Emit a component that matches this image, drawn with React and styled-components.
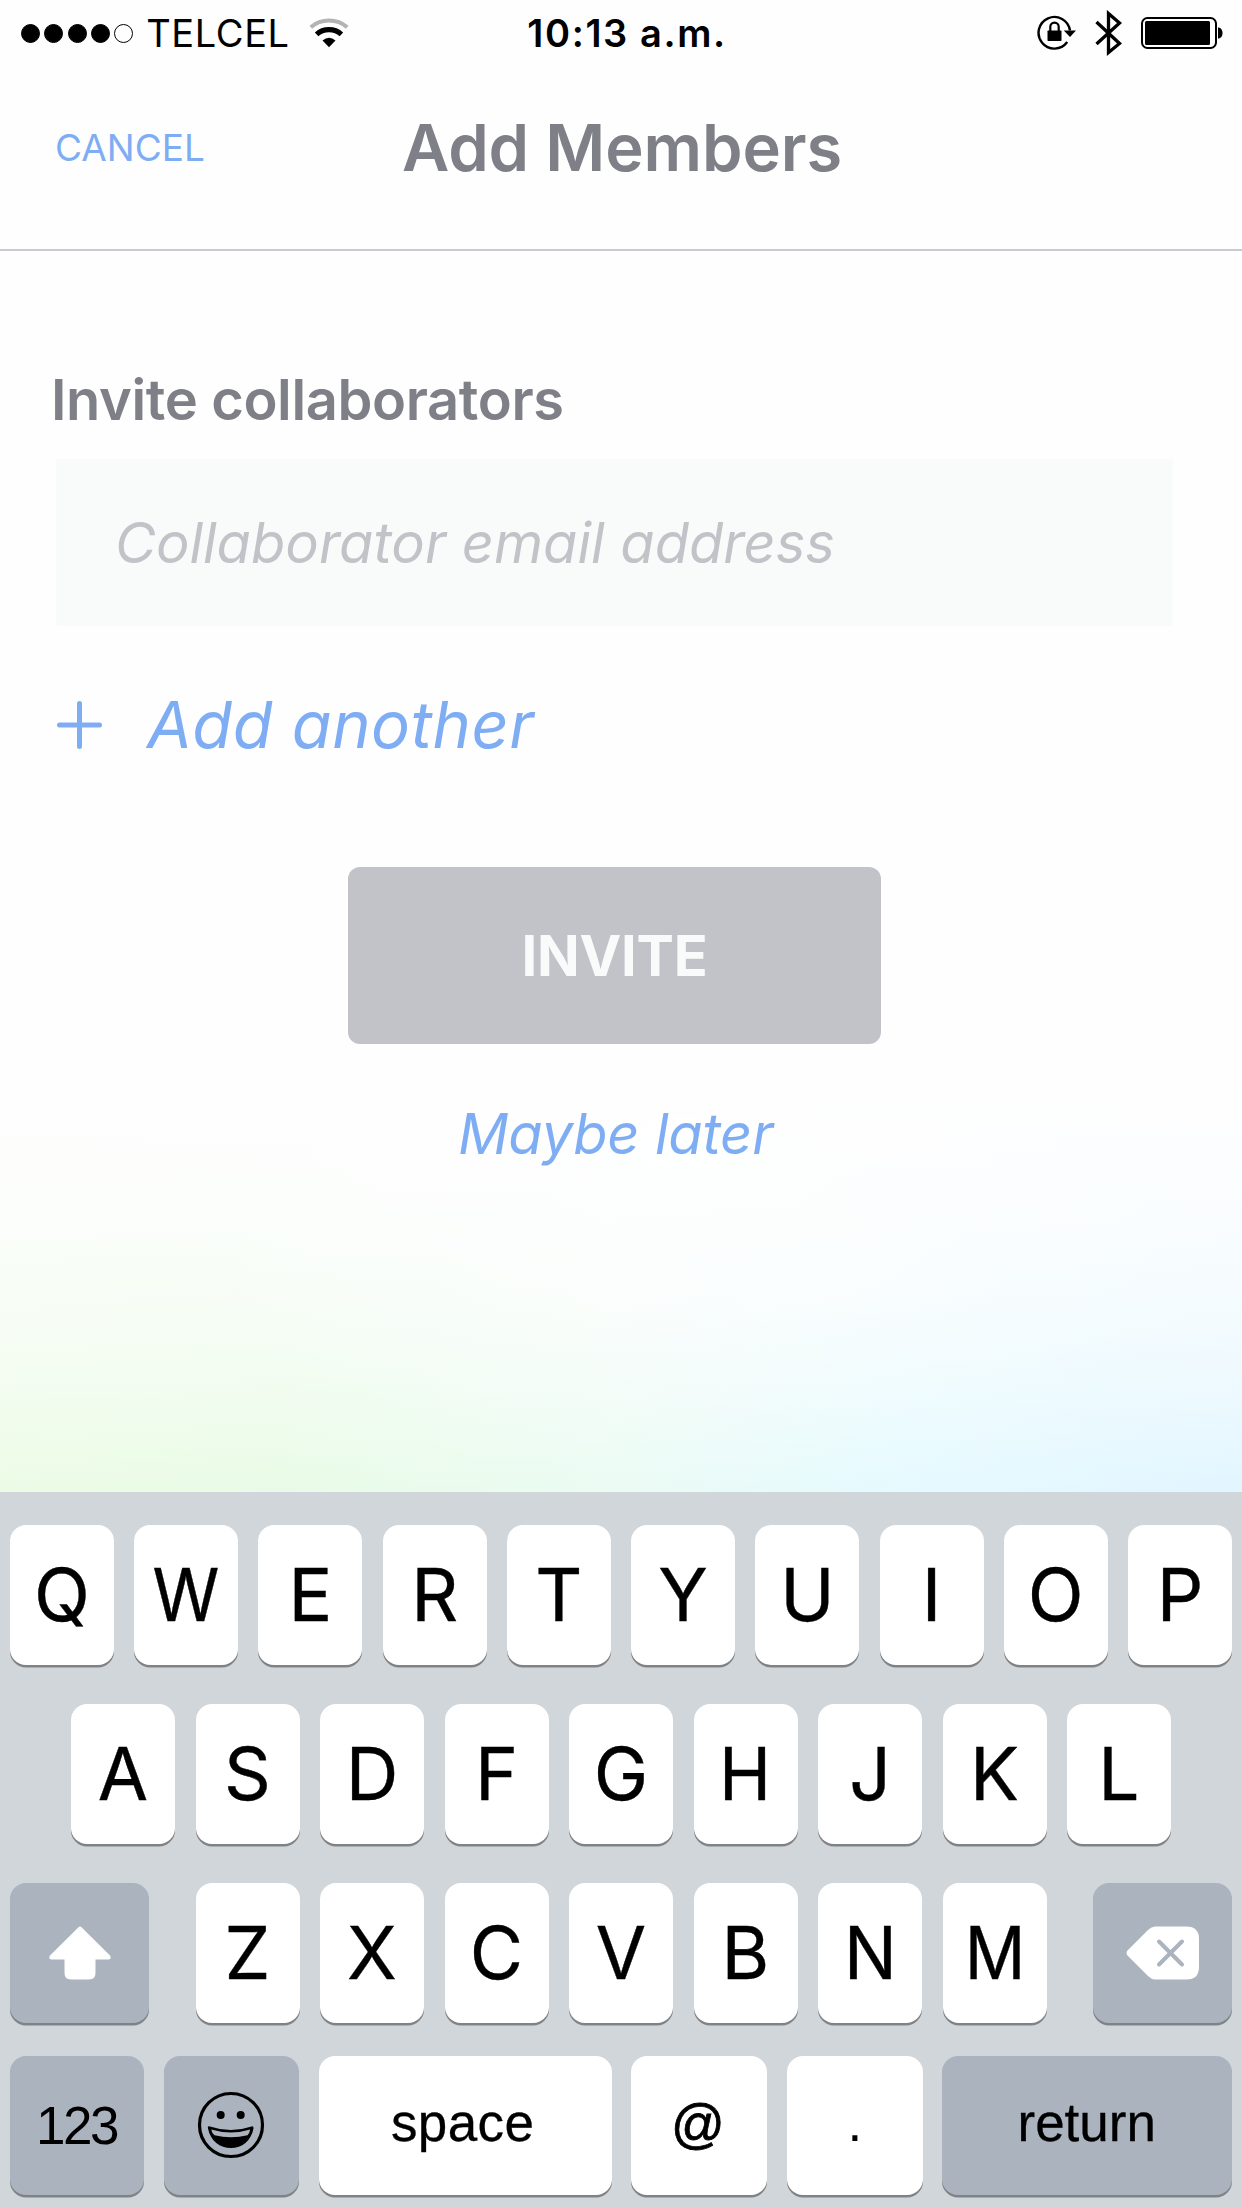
import React from "react";
import styled, { createGlobalStyle } from "styled-components";

const GlobalStyle = createGlobalStyle`
  * { box-sizing: border-box; }
  body { margin: 0; background: #fff; }
  button { border: 0; padding: 0; background: none; font: inherit; color: inherit; }
`;

const Screen = styled.div`
  display: flex;
  flex-direction: column;
  width: 1242px;
  height: 2208px;
  overflow: hidden;
  background: #fefefe;
  font-family: Inter, "Liberation Sans", sans-serif;
`;

/* ---------- status bar ---------- */

const StatusBar = styled.div`
  display: grid;
  grid-template-columns: 1fr auto 1fr;
  align-items: center;
  flex: none;
  height: 66px;
  padding: 0 19px 0 21px;
  color: #000;
  font-size: 38px;
  line-height: 66px;
`;

const StatusGroup = styled.div`
  display: flex;
  align-items: center;
`;

const StatusIcons = styled(StatusGroup)`
  justify-content: flex-end;
  gap: 19px;
`;

const SignalDots = styled.div`
  display: flex;
  gap: 4.3px;
`;

const Dot = styled.span`
  width: 19px;
  height: 19px;
  border-radius: 50%;
  border: 1.6px solid #000;
  background: ${(p) => (p.$on ? "#000" : "transparent")};
`;

const Carrier = styled.span`
  margin: 0 19px 0 13px;
  letter-spacing: 0.6px;
`;

const Clock = styled.span`
  font-weight: 600;
  letter-spacing: 1.6px;
  padding-left: 10px;
`;

/* ---------- header ---------- */

const Header = styled.header`
  display: grid;
  grid-template-columns: 1fr auto 1fr;
  align-items: center;
  flex: none;
  height: 185px;
  padding: 1px 55px 20px 55px;
  border-bottom: 2px solid #c8cad2;
`;

const CancelButton = styled.button`
  justify-self: start;
  color: #7fadf3;
  font-size: 37px;
  line-height: 50px;
`;

const Title = styled.h1`
  margin: 0;
  padding-left: 2px;
  color: #7f7f88;
  font-size: 65px;
  font-weight: 600;
  line-height: 80px;
  letter-spacing: -0.1px;
`;

/* ---------- form ---------- */

const Content = styled.main`
  display: flex;
  flex-direction: column;
  align-items: center;
  flex: none;
  height: 1241px;
  padding: 119px 69px 0 56px;
  background:
    radial-gradient(ellipse 46% 26% at 55% 72%, rgba(255, 255, 255, 0.55), rgba(255, 255, 255, 0) 100%),
    linear-gradient(
      to bottom,
      #fefefe 68%,
      rgba(254, 254, 254, 0.88) 76%,
      rgba(254, 254, 254, 0.68) 85%,
      rgba(254, 254, 254, 0.38) 93%,
      rgba(254, 254, 254, 0.05) 100%
    ),
    linear-gradient(to right, #ebfbe4 0%, #e8fbe5 22%, #eafbf2 48%, #e4faff 72%, #e0f5ff 100%);
`;

const Label = styled.label`
  align-self: flex-start;
  margin-left: -5px;
  color: #7f7f88;
  font-size: 56px;
  font-weight: 600;
  line-height: 60px;
  letter-spacing: -0.38px;
`;

const EmailInput = styled.input`
  display: block;
  width: 1117px;
  height: 167px;
  margin-top: 29px;
  padding: 1px 59px 0;
  border: 0;
  border-radius: 3px;
  background: #f9fbfa;
  font: italic 400 56px/60px Inter, "Liberation Sans", sans-serif;
  color: #7f7f88;

  &::placeholder {
    color: #c2c3c8;
    opacity: 1;
  }
`;

const AddAnother = styled.button`
  display: flex;
  align-items: center;
  align-self: flex-start;
  gap: 45px;
  margin-top: 69px;
  padding-left: 1px;
  color: #7fadf3;
  font-size: 65px;
  font-style: italic;
  line-height: 60px;
  letter-spacing: 0.5px;
`;

const InviteButton = styled.button`
  width: 533px;
  height: 177px;
  margin-top: 112px;
  border-radius: 12px;
  background: #c2c3c8;
  color: #f9fbfa;
  font-size: 56px;
  font-weight: 750;
  line-height: 60px;
  letter-spacing: -0.2px;
`;

const LaterLink = styled.button`
  margin-top: 60px;
  padding-left: 2px;
  color: #7fadf3;
  font-size: 56px;
  font-style: italic;
  line-height: 60px;
  letter-spacing: -0.2px;
`;

/* ---------- keyboard ---------- */

const Keyboard = styled.div`
  display: flex;
  flex-direction: column;
  flex: none;
  height: 716px;
  padding: 33px 10px 0;
  background: #d1d6da;
`;

const KeyRow = styled.div`
  display: flex;
  justify-content: space-between;
  padding: 0 ${(p) => p.$inset || 0}px;
  margin-bottom: ${(p) => p.$gap || 0}px;
`;

const LetterGroup = styled.div`
  display: flex;
  justify-content: space-between;
  width: 851px;
`;

const Key = styled.button`
  display: flex;
  align-items: center;
  justify-content: center;
  flex: none;
  width: ${(p) => p.$width || 104}px;
  height: 139.5px;
  border-radius: 16px;
  background: ${(p) => (p.$dark ? "#abb3bf" : "#fff")};
  box-shadow: 0 2.5px 0 #808386;
  color: #000;
  font-size: 73px;
  line-height: 139px;
`;

const Glyph = styled.span`
  -webkit-text-stroke: 0.4px #000;
  transform: scaleX(${(p) => p.$stretch});
`;

const WordKey = styled(Key)`
  font-family: "Liberation Sans", Arial, sans-serif;
  font-size: 53px;
  letter-spacing: ${(p) => p.$tracking || 0}px;
  padding: 0 ${(p) => p.$shift || 0}px ${(p) => p.$lift || 0}px 0;
  -webkit-text-stroke: ${(p) => p.$stroke || 0}px #000;
`;

/* ---------- icons ---------- */

const WifiIcon = () => (
  <svg width="40" height="30" viewBox="0 0 40 30" fill="none">
    <path d="M1.800 9.200C12 .4 28 .4 38.200 9.200" stroke="#b3b3b3" strokeWidth="4" />
    <path d="M7.600 16.300C14.500 10 25.500 10 32.400 16.300" stroke="#000" strokeWidth="5.200" />
    <path d="M13.500 22.600Q20 16.800 26.500 22.600L20 29.300Z" fill="#000" />
  </svg>
);

const LockIcon = () => (
  <svg width="39" height="36" viewBox="0 0 39 36" fill="none">
    <path d="M33 15.500A15.800 15.800 0 1 0 30.200 27" stroke="#000" strokeWidth="2.400" />
    <path d="M26.800 15.500H39L33 22Z" fill="#000" />
    <rect x="10.500" y="15.500" width="14" height="10.500" rx="0.800" fill="#000" />
    <path d="M13.300 16.500V11.800A4.200 4.200 0 0 1 21.700 11.800V16.500" stroke="#000" strokeWidth="2.200" />
  </svg>
);

const BluetoothIcon = () => (
  <svg width="27" height="46" viewBox="0 0 27 46" fill="none">
    <path d="M1.500 12L24.500 33.500L13.500 42.500V3.500L24.500 13L1.500 34" stroke="#000" strokeWidth="3.300" />
  </svg>
);

const BatteryIcon = () => (
  <svg width="82" height="32" viewBox="0 0 82 32">
    <rect x="1" y="1" width="74" height="30" rx="5.500" fill="none" stroke="#000" strokeWidth="2" />
    <rect x="4" y="4" width="65" height="24" rx="1.500" fill="#000" />
    <path d="M77 10.500C80 10.500 81.500 13 81.500 16S80 21.500 77 21.500Z" fill="#000" />
  </svg>
);

const PlusIcon = () => (
  <svg width="45" height="48" viewBox="0 0 45 48">
    <path d="M22.500 2.500V45.500M2.500 24H42.500" stroke="#7fadf3" strokeWidth="5" strokeLinecap="round" />
  </svg>
);

const ShiftIcon = () => (
  <svg width="62" height="54" viewBox="0 0 62 54">
    <path
      d="M29.500 1.200Q31 -.2 32.500 1.200L61 29.500Q63 33 59.500 33.500H46.500V47Q46.500 53.500 40 53.500H22Q15.500 53.500 15.500 47V33.500H2.500Q-1 33 1 29.500Z"
      fill="#fff"
    />
  </svg>
);

const DeleteIcon = () => (
  <svg width="74" height="54" viewBox="0 0 74 54">
    <path
      d="M29 .5H60.500Q73 .5 73 13V41Q73 53.500 60.500 53.500H29Q25.500 53.500 22 50L1.500 29.500Q-.5 27 1.500 24.500L22 4Q25.500 .5 29 .5Z"
      fill="#fff"
    />
    <path d="M33 15.500L56 38.500M56 15.500L33 38.500" stroke="#abb3bf" strokeWidth="4" strokeLinecap="round" />
  </svg>
);

const EmojiIcon = () => (
  <svg width="68" height="68" viewBox="0 0 68 68">
    <circle cx="34" cy="34" r="31.500" fill="none" stroke="#000" strokeWidth="3.200" />
    <circle cx="23.700" cy="24" r="4" />
    <circle cx="43.700" cy="24" r="4" />
    <path d="M10.800 35.800Q11.300 35 13 35.400Q34 42.500 54.500 35.400Q56.800 35 56.500 37.500C54 50 45 57 34 57S13.500 50 11 37.500Z" />
    <path d="M14.200 38.500Q34 44.500 53.200 38.500Q52.500 42.500 50.500 44.200Q34 48.500 17.500 44.200Q15 42.500 14.200 38.500Z" fill="#abb3bf" />
  </svg>
);

/* W and M are drawn a little narrower than the rest of the alphabet. */
const STRETCH = { W: 0.93, M: 0.92, N: 0.96, H: 0.96 };

const Letters = ({ keys }) =>
  [...keys].map((k) => (
    <Key key={k}>
      <Glyph $stretch={STRETCH[k] || 1}>{k}</Glyph>
    </Key>
  ));

export default function App() {
  return (
    <>
      <GlobalStyle />
      <Screen>
        <StatusBar>
          <StatusGroup>
            <SignalDots>
              {[1, 1, 1, 1, 0].map((on, i) => (
                <Dot key={i} $on={on} />
              ))}
            </SignalDots>
            <Carrier>TELCEL</Carrier>
            <WifiIcon />
          </StatusGroup>
          <Clock>10:13 a.m.</Clock>
          <StatusIcons>
            <LockIcon />
            <BluetoothIcon />
            <BatteryIcon />
          </StatusIcons>
        </StatusBar>

        <Header>
          <CancelButton>CANCEL</CancelButton>
          <Title>Add Members</Title>
        </Header>

        <Content>
          <Label htmlFor="email">Invite collaborators</Label>
          <EmailInput id="email" placeholder="Collaborator email address" />
          <AddAnother>
            <PlusIcon />
            Add another
          </AddAnother>
          <InviteButton>INVITE</InviteButton>
          <LaterLink>Maybe later</LaterLink>
        </Content>

        <Keyboard>
          <KeyRow $gap={39.5}>
            <Letters keys="QWERTYUIOP" />
          </KeyRow>
          <KeyRow $gap={39.5} $inset={61}>
            <Letters keys="ASDFGHJKL" />
          </KeyRow>
          <KeyRow $gap={33}>
            <Key $width={139} $dark>
              <ShiftIcon />
            </Key>
            <LetterGroup>
              <Letters keys="ZXCVBNM" />
            </LetterGroup>
            <Key $width={139} $dark>
              <DeleteIcon />
            </Key>
          </KeyRow>
          <KeyRow>
            <WordKey $width={134} $dark $tracking={-2.5} $shift={1}>
              123
            </WordKey>
            <Key $width={135.5} $dark>
              <EmojiIcon />
            </Key>
            <WordKey $width={293} $lift={6} $shift={5} $tracking={0.4} $stroke={0.3}>
              space
            </WordKey>
            <WordKey $width={136} $lift={4} $shift={3} $stroke={0.8}>
              @
            </WordKey>
            <WordKey $width={136} $lift={5}>
              .
            </WordKey>
            <WordKey $width={289.5} $dark $lift={6} $shift={1} $stroke={0.3}>
              return
            </WordKey>
          </KeyRow>
        </Keyboard>
      </Screen>
    </>
  );
}
